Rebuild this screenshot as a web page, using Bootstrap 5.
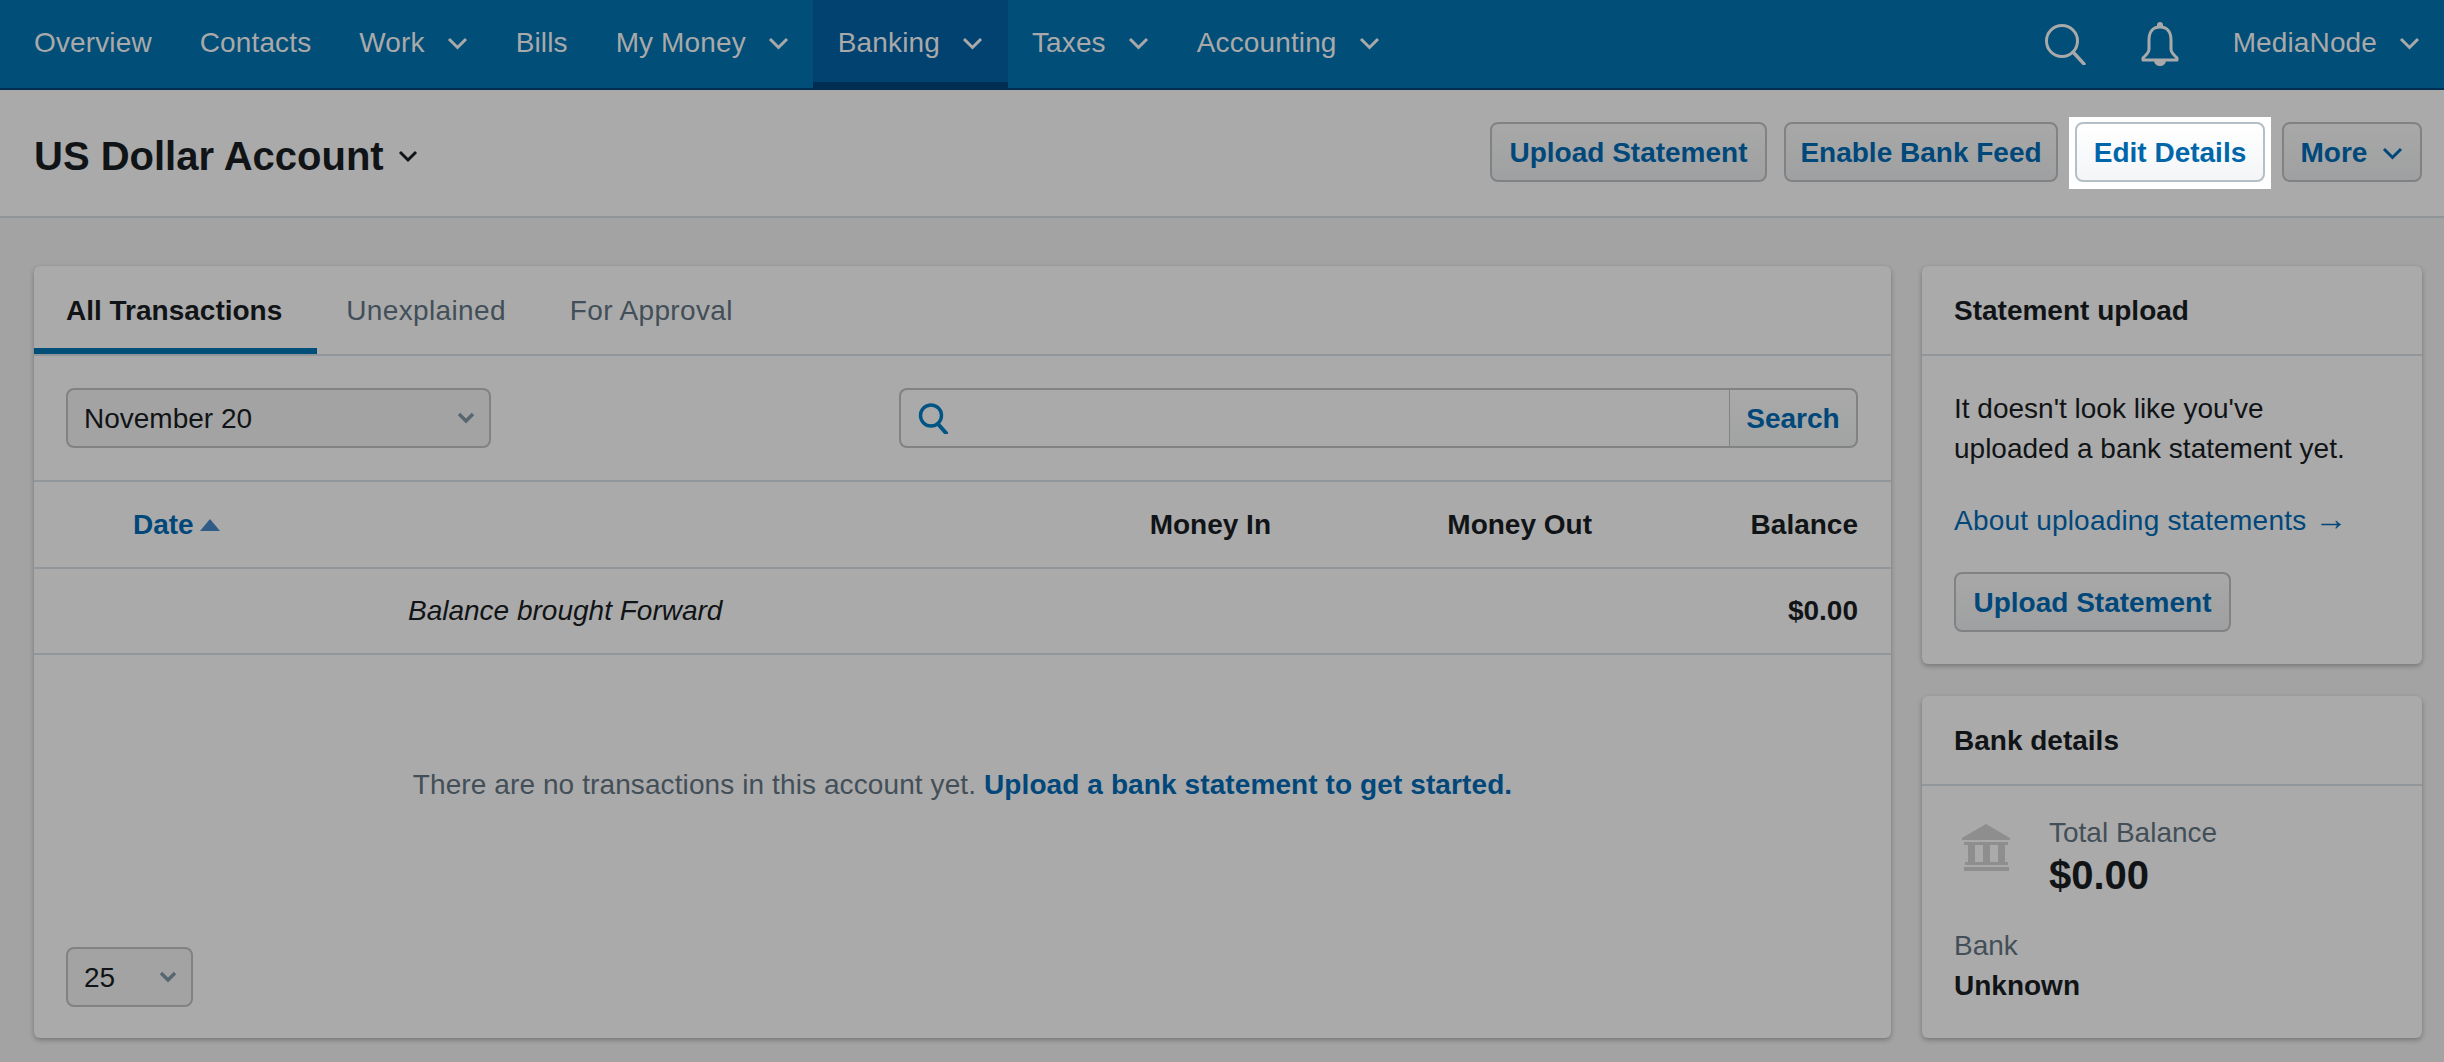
<!DOCTYPE html>
<html lang="en">
<head>
<meta charset="utf-8">
<title>US Dollar Account</title>
<link href="https://cdn.jsdelivr.net/npm/bootstrap@5.3.0/dist/css/bootstrap.min.css" rel="stylesheet">
<style>
html,body{height:100%}
body{font-family:"Liberation Sans",Arial,sans-serif;font-size:28px;line-height:40px;color:#111416;background:#a3a3a3;overflow:hidden}
.topbar{height:90px;background:#014e79;border-bottom:2px solid #002e52;padding:0 24px 0 10px;align-items:stretch;flex-wrap:nowrap}
.topbar .navbar-nav{align-items:stretch;height:88px}
.topbar .navbar-nav .nav-link{display:flex;align-items:center;gap:22px;height:88px;padding:0 24px 2px;color:#a9a9a9;font-size:28px;letter-spacing:.13px}
.topbar .nav-item.here{background:#014270;box-shadow:inset 0 -6px 0 #002e52}
.topbar .navbar-nav .nav-item.here .nav-link{padding:0 25px 2px}
.topbar .navbar-nav.tools{gap:54px}
.topbar .navbar-nav.tools .nav-link{padding:0 0 2px}
.topicon{display:flex;align-items:center}
.bellspot{margin-right:-1px}
.headbar{height:128px;background:#aaaaaa;border-bottom:2px solid #919597;padding:32px 22px 0 34px}
.acct{font-size:40px;line-height:48px;font-weight:700;margin:0;padding-top:10px;color:#111416;display:flex;align-items:center;gap:14px}
.dimbtn{height:60px;border:2px solid #808284;border-radius:8px;background:linear-gradient(#a8a8a8,#9fa0a1);color:#00477a;font-weight:700;font-size:28px;line-height:40px;padding:2px 0 0;display:inline-flex;align-items:center;justify-content:center;gap:15px;white-space:nowrap}
.dimbtn:hover{background:#a0a1a2;color:#00477a;border-color:#808284}
.btnrow{gap:17px}
.w-upload{width:277px}
.w-enable{width:274px}
.w-edit{width:190px}
.w-more{width:140px}
.whitebox{background:#fff;padding:5px 6px 7px;margin:-5px -6px -7px;display:inline-flex;position:relative;z-index:1}
.dimbtn.spot{border-color:#b5bfc6;background:linear-gradient(#ffffff,#f3f5f7);color:#0066aa}
.workspace{padding:48px 22px 24px 34px;gap:31px;height:844px;align-items:stretch}
.mainpanel{width:1857px;flex:none}
.sidepanel{width:500px;flex:none;gap:32px}
.sheet{background:#aaaaaa;border:0;border-radius:6px;box-shadow:0 2px 5px rgba(0,0,0,.28);color:#111416}
.sheet .card-header{height:90px;background:none;border-bottom:2px solid #91969a;border-radius:0;padding:25px 32px 23px;font-weight:700;line-height:40px}
.sheet .card-body{padding:33px 32px 32px;flex:1}
.tabstrip{height:90px;border-bottom:2px solid #91969a;flex-wrap:nowrap}
.tabstrip .nav-link{height:88px;padding:25px 35px 23px 29px;color:#434f58;line-height:40px;letter-spacing:.35px}
.tabstrip .nav-link.active{color:#111416;font-weight:700;padding-left:32px;letter-spacing:0;box-shadow:inset 0 -6px 0 #014e79}
.filterbar{height:126px;border-bottom:2px solid #91969a;padding:32px 33px 0 32px;justify-content:space-between}
.picker{height:60px;border:2px solid #808284;border-radius:8px;padding:2px 16px 0;color:#111416;font-size:28px;line-height:40px;background-color:#a3a3a3;background-image:url("data:image/svg+xml,%3Csvg xmlns='http://www.w3.org/2000/svg' viewBox='0 0 18 12'%3E%3Cpath d='M2 2l7 7 7-7' fill='none' stroke='%23586670' stroke-width='3.4'/%3E%3C/svg%3E");background-repeat:no-repeat;background-size:18px 12px;background-position:right 14px center}
.picker.wide{width:425px}
.picker.small{width:127px}
.seeker{width:959px;height:60px;flex-wrap:nowrap}
.seeker .input-group-text{background:none;border:2px solid #808284;border-right:0;border-radius:8px 0 0 8px;padding:0 0 0 17px}
.seeker .form-control{background:none;border:2px solid #808284;border-left:0;border-right:0;box-shadow:none;font-size:28px}
.seeker .dimbtn{border-radius:0 8px 8px 0;border-left-width:1px;width:129px;font-size:28px;background:linear-gradient(#a9a9a9,#a2a3a3)}
.ledger{margin:0;table-layout:fixed;width:1857px;--bs-table-bg:transparent;--bs-table-color:#111416;color:#111416}
.ledger td,.ledger th{height:86px;padding:0;vertical-align:middle;border-bottom:2px solid #91969a;font-size:28px;line-height:40px}
.ledger .c1{width:374px;padding-left:99px}
.ledger .c2{width:592px}
.ledger .c3{width:271px;text-align:right}
.ledger .c4{width:321px;text-align:right}
.ledger .c5{width:299px;text-align:right;padding-right:33px}
.sortlink{color:#01477a;text-decoration:none;font-weight:700;display:inline-flex;align-items:center;gap:6px}
.nothing{height:292px;padding-top:110px;text-align:center;color:#434f58;letter-spacing:.1px}
.nothing a,.bluelink{color:#01477a;text-decoration:none}
.nothing a{font-weight:700}
.pagerow{padding:0 32px}
.side-copy{margin:0 0 32px}
.side-copy.snug{margin-bottom:31px}
.bluelink{letter-spacing:.2px}
.longarrow{font-size:33px;line-height:1}
.greytxt{color:#434f58}
.bigamt{font-size:40px;line-height:44px;font-weight:700}
.sheet .card-body.bankbody{padding:27px 32px 0}
.bankglyph{width:48px;margin:11px 0 0 8px;flex:none}
.balancewrap{margin-left:39px}
.boldtxt{font-weight:700}
.bankmeta{margin-top:29px}
</style>
</head>
<body>
<nav class="navbar navbar-expand topbar">
  <ul class="navbar-nav me-auto">
    <li class="nav-item"><a class="nav-link" href="#">Overview</a></li>
    <li class="nav-item"><a class="nav-link" href="#">Contacts</a></li>
    <li class="nav-item"><a class="nav-link" href="#">Work <svg width="21" height="13" viewBox="0 0 21 13"><path d="M2 2l8.5 8.5L19 2" fill="none" stroke="#a9a9a9" stroke-width="3"/></svg></a></li>
    <li class="nav-item"><a class="nav-link" href="#">Bills</a></li>
    <li class="nav-item"><a class="nav-link" href="#">My Money <svg width="21" height="13" viewBox="0 0 21 13"><path d="M2 2l8.5 8.5L19 2" fill="none" stroke="#a9a9a9" stroke-width="3"/></svg></a></li>
    <li class="nav-item here"><a class="nav-link" href="#">Banking <svg width="21" height="13" viewBox="0 0 21 13"><path d="M2 2l8.5 8.5L19 2" fill="none" stroke="#a9a9a9" stroke-width="3"/></svg></a></li>
    <li class="nav-item"><a class="nav-link" href="#">Taxes <svg width="21" height="13" viewBox="0 0 21 13"><path d="M2 2l8.5 8.5L19 2" fill="none" stroke="#a9a9a9" stroke-width="3"/></svg></a></li>
    <li class="nav-item"><a class="nav-link" href="#">Accounting <svg width="21" height="13" viewBox="0 0 21 13"><path d="M2 2l8.5 8.5L19 2" fill="none" stroke="#a9a9a9" stroke-width="3"/></svg></a></li>
  </ul>
  <ul class="navbar-nav tools">
    <li class="nav-item topicon"><svg width="42" height="42" viewBox="0 0 42 42"><circle cx="18" cy="18" r="15.5" fill="none" stroke="#a9a9a9" stroke-width="3"/><path d="M29 29l11 12" stroke="#a9a9a9" stroke-width="3.4" stroke-linecap="round"/></svg></li>
    <li class="nav-item topicon bellspot"><svg width="40" height="44" viewBox="0 0 40 44"><path d="M20 5c-8 0-11 6-11 13v9c0 4-3 6-6 9v2h34v-2c-3-3-6-5-6-9v-9c0-7-3-13-11-13z" fill="none" stroke="#a9a9a9" stroke-width="3" stroke-linejoin="round"/><path d="M17 3a3 3 0 016 0v3h-6z" fill="#a9a9a9"/><path d="M14 38h12c0 4-3 6-6 6s-6-2-6-6z" fill="#a9a9a9"/></svg></li>
    <li class="nav-item"><a class="nav-link" href="#">MediaNode <svg width="21" height="13" viewBox="0 0 21 13"><path d="M2 2l8.5 8.5L19 2" fill="none" stroke="#a9a9a9" stroke-width="3"/></svg></a></li>
  </ul>
</nav>

<header class="headbar d-flex justify-content-between align-items-start">
  <h1 class="acct">US Dollar Account <svg width="20" height="13" viewBox="0 0 20 13"><path d="M2 2l8 8 8-8" fill="none" stroke="#111416" stroke-width="3"/></svg></h1>
  <div class="d-flex btnrow">
    <a class="btn dimbtn w-upload" href="#">Upload Statement</a>
    <a class="btn dimbtn w-enable" href="#">Enable Bank Feed</a>
    <span class="whitebox"><a class="btn dimbtn spot w-edit" href="#">Edit Details</a></span>
    <a class="btn dimbtn w-more" href="#">More <svg width="21" height="13" viewBox="0 0 21 13"><path d="M2 2l8.5 8.5L19 2" fill="none" stroke="#00477a" stroke-width="3"/></svg></a>
  </div>
</header>

<main class="d-flex workspace">
  <section class="card sheet mainpanel">
    <ul class="nav tabstrip">
      <li class="nav-item"><a class="nav-link active" href="#">All Transactions</a></li>
      <li class="nav-item"><a class="nav-link" href="#">Unexplained</a></li>
      <li class="nav-item"><a class="nav-link" href="#">For Approval</a></li>
    </ul>
    <div class="d-flex filterbar align-items-start">
      <select class="form-select picker wide"><option>November 20</option></select>
      <div class="input-group seeker">
        <span class="input-group-text"><svg width="31" height="31" viewBox="0 0 31 31"><circle cx="13" cy="12.5" r="10.5" fill="none" stroke="#015585" stroke-width="3.4"/><path d="M20 21l8 9" stroke="#015585" stroke-width="4" stroke-linecap="round"/></svg></span>
        <input class="form-control" type="text" aria-label="Search">
        <button class="btn dimbtn" type="button">Search</button>
      </div>
    </div>
    <table class="table ledger">
      <thead>
        <tr>
          <th class="c1"><a class="sortlink" href="#">Date <svg width="20" height="12" viewBox="0 0 20 12"><path d="M10 0l10 12H0z" fill="#2f5d88"/></svg></a></th>
          <th class="c2"></th>
          <th class="c3">Money In</th>
          <th class="c4">Money Out</th>
          <th class="c5">Balance</th>
        </tr>
      </thead>
      <tbody>
        <tr>
          <td class="c1"></td>
          <td class="c2"><em>Balance brought Forward</em></td>
          <td class="c3"></td>
          <td class="c4"></td>
          <td class="c5 fw-bold">$0.00</td>
        </tr>
      </tbody>
    </table>
    <p class="nothing m-0">There are no transactions in this account yet. <a href="#">Upload a bank statement to get started.</a></p>
    <div class="pagerow">
      <select class="form-select picker small"><option>25</option></select>
    </div>
  </section>

  <aside class="d-flex flex-column sidepanel">
    <section class="card sheet">
      <div class="card-header">Statement upload</div>
      <div class="card-body">
        <p class="side-copy">It doesn't look like you've<br>uploaded a bank statement yet.</p>
        <p class="side-copy snug"><a class="bluelink" href="#">About uploading statements <span class="longarrow">→</span></a></p>
        <a class="btn dimbtn w-upload" href="#">Upload Statement</a>
      </div>
    </section>
    <section class="card sheet flex-fill">
      <div class="card-header">Bank details</div>
      <div class="card-body bankbody">
        <div class="d-flex">
          <svg class="bankglyph" height="47" viewBox="0 0 48 47" fill="#8e8e8e"><path d="M24 0L0 14v2h48v-2z"/><rect x="2" y="18" width="44" height="3"/><rect x="6" y="20" width="7" height="18"/><rect x="21" y="20" width="7" height="18"/><rect x="36" y="20" width="7" height="18"/><rect x="3" y="38" width="43" height="3"/><rect x="2" y="43" width="45" height="4"/></svg>
          <div class="balancewrap">
            <div class="greytxt">Total Balance</div>
            <div class="bigamt">$0.00</div>
          </div>
        </div>
        <div class="bankmeta">
          <div class="greytxt">Bank</div>
          <div class="boldtxt">Unknown</div>
        </div>
      </div>
    </section>
  </aside>
</main>
<script src="https://cdn.jsdelivr.net/npm/bootstrap@5.3.0/dist/js/bootstrap.bundle.min.js"></script>
</body>
</html>
